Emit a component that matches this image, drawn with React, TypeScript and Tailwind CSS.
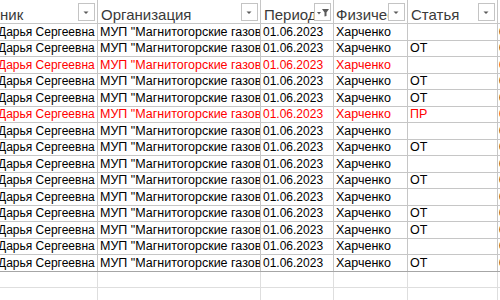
import React from "react";

type Row = { ot: string; red?: boolean };

const rows: Row[] = [
  { ot: "" },
  { ot: "ОТ" },
  { ot: "", red: true },
  { ot: "ОТ" },
  { ot: "ОТ" },
  { ot: "ПР", red: true },
  { ot: "" },
  { ot: "ОТ" },
  { ot: "" },
  { ot: "ОТ" },
  { ot: "" },
  { ot: "ОТ" },
  { ot: "ОТ" },
  { ot: "" },
  { ot: "ОТ" },
];

const cols = "grid grid-cols-[98px_163px_73px_74px_90px_1fr]";

function DropBtn({ filter }: { filter?: boolean }) {
  return (
    <div className="shrink-0 self-start mt-[3px] mr-[2px] h-[18px] w-[17px] border border-[#c4c4c4] bg-white">
      <svg width="15" height="16" viewBox="0 0 15 16">
        {filter ? (
          <>
            <polygon points="2,8 6,8 4,10.5" fill="#5a5a5a" />
            <polygon points="7,5 14,5 11.5,8.5 11.5,12 9.5,12.5 9.5,8.5" fill="#5a5a5a" />
          </>
        ) : (
          <polygon points="4.5,7.5 9.5,7.5 7,10" fill="#5a5a5a" />
        )}
      </svg>
    </div>
  );
}

function HeadCell({ text, filter, indent = 3 }: { text: string; filter?: boolean; indent?: number }) {
  return (
    <div className="flex h-full items-end overflow-hidden border-r border-[#c6c6c6]">
      <div
        className="min-w-0 flex-1 overflow-hidden whitespace-nowrap text-[15px] leading-[17px] text-[#3a3a3a]"
        style={{ paddingLeft: indent }}
      >
        {text}
      </div>
      <DropBtn filter={filter} />
    </div>
  );
}

function Cell({
  children,
  red,
  last,
  small,
}: {
  children?: React.ReactNode;
  red?: boolean;
  last?: boolean;
  small?: boolean;
}) {
  return (
    <div
      className={
        "flex items-end overflow-hidden whitespace-nowrap leading-[15px] " +
        (small ? "text-[12px] " : "text-[12.5px] ") +
        (last ? "pl-[1px] " : "pl-[2px] border-r border-[#c6c6c6] ") +
        (red ? "text-[#ff0000]" : "text-black")
      }
    >
      {children}
    </div>
  );
}

export default function App() {
  return (
    <div
      className="h-[300px] w-[500px] overflow-hidden bg-white"
      style={{ fontFamily: '"Liberation Sans", Arial, sans-serif' }}
    >
      <div className={cols + " h-[24px] border-b border-[#c6c6c6]"}>
        <HeadCell text="ник" indent={0} />
        <HeadCell text="Организация" />
        <HeadCell text="Период" filter />
        <HeadCell text="Физическое лицо" indent={2} />
        <HeadCell text="Статья" />
        <div />
      </div>
      {rows.map((r, i) => (
        <div
          key={i}
          className={
            cols +
            " h-[16.5px] border-b " +
            (i === rows.length - 1 ? "border-[#a6a6a6]" : "border-[#c6c6c6]")
          }
        >
          <Cell red={r.red} small>
            <span className="-ml-[4px]">Дарья Сергеевна</span>
          </Cell>
          <Cell red={r.red}>МУП "Магнитогорские газовые сети"</Cell>
          <Cell red={r.red} small>
            01.06.2023
          </Cell>
          <Cell red={r.red}>Харченко</Cell>
          <Cell red={r.red}>{r.ot}</Cell>
          <Cell red={r.red} last>
            0
          </Cell>
        </div>
      ))}
      {[0, 1].map((i) => (
        <div key={i} className={cols + " h-[16.5px] border-b border-[#dedede]"}>
          <div className="border-r border-[#dedede]" />
          <div className="border-r border-[#dedede]" />
          <div className="border-r border-[#dedede]" />
          <div className="border-r border-[#dedede]" />
          <div className="border-r border-[#dedede]" />
          <div />
        </div>
      ))}
    </div>
  );
}
